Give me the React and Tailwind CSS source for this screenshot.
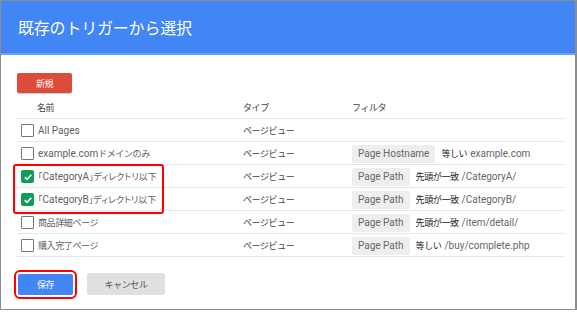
import React from "react";

const rows = [
  { name: "All Pages", type: "ページビュー", checked: false },
  { name: "example.comドメインのみ", type: "ページビュー", chip: "Page Hostname", op: "等しい", value: "example.com" },
  { name: "｢CategoryA｣ディレクトリ以下", narrow: true, type: "ページビュー", checked: true, chip: "Page Path", op: "先頭が一致", value: "/CategoryA/" },
  { name: "｢CategoryB｣ディレクトリ以下", narrow: true, type: "ページビュー", checked: true, chip: "Page Path", op: "先頭が一致", value: "/CategoryB/" },
  { name: "商品詳細ページ", type: "ページビュー", chip: "Page Path", op: "先頭が一致", value: "/item/detail/" },
  { name: "購入完了ページ", type: "ページビュー", chip: "Page Path", op: "等しい", value: "/buy/complete.php" },
];

const font = "font-['Roboto','Noto_Sans_CJK_JP',sans-serif]";
const jp = "font-['Noto_Sans_CJK_JP',sans-serif] text-[9px] leading-none tracking-[-0.4px]";
const jpNarrow = "font-['Noto_Sans_CJK_JP',sans-serif] text-[9px] leading-none [font-feature-settings:'palt']";

// Japanese runs render a bit smaller than the Latin ones in the screenshot
const Mixed = ({ children, narrow }) =>
  children.split(/([\u0020-\u007e]+)/).filter(Boolean).map((part, i) =>
    /^[\u0020-\u007e]+$/.test(part) ? (
      <span key={i} className="leading-none">{part}</span>
    ) : (
      <span key={i} className={narrow ? jpNarrow : jp}>{part}</span>
    )
  );

const Checkbox = ({ checked }) =>
  checked ? (
    <div className="w-[13px] h-[13px] rounded-[2px] bg-[#0f9d58] flex items-center justify-center">
      <svg width="10" height="10" viewBox="0 0 10 10">
        <path d="M1.8 5.2 L4 7.3 L8.3 2.8" fill="none" stroke="#fff" strokeWidth="1.6" />
      </svg>
    </div>
  ) : (
    <div className="w-[13px] h-[13px] rounded-[1px] border-[1.5px] border-[#777] bg-white" />
  );

export default function App() {
  return (
    <div className={`w-[577px] h-[312px] bg-white ${font}`}>
      <div className="relative w-[577px] h-[310px] border-t border-l border-b border-r-2 border-[#8c8c8c] bg-white">
        {/* Header */}
        <div className="h-[54px] bg-[#4285f4] border-b-2 border-[#6aa1f7] flex items-center pl-[17px]">
          <span className="text-white text-[16px] tracking-[-0.2px] font-['Noto_Sans_CJK_JP',sans-serif]">既存のトリガーから選択</span>
        </div>

        <div className="pl-[16px] pr-[10px]">
          <button className="mt-[18px] w-[55px] h-[20px] bg-[#dd4b39] text-white rounded-[2px] shadow-[0_1px_1px_rgba(0,0,0,0.2)] flex items-center justify-center">
            <span className={jp}>新規</span>
          </button>

          {/* Table */}
          <div className="mt-[3px] text-[10px]">
            <div className="h-[23px] pt-[1px] flex items-center border-b border-[#e6e6e6] text-[#444]">
              <div className="w-[226px] pl-[20px]"><span className={jp}>名前</span></div>
              <div className="w-[109px]"><span className={jp}>タイプ</span></div>
              <div><span className={jp}>フィルタ</span></div>
            </div>
            {rows.map((r, i) => (
              <div key={i} className="h-[23px] pt-[1px] flex items-center border-b border-[#e6e6e6]">
                <div className="w-[226px] flex items-center pl-[4px] gap-[4px] text-[#5f5f5f]">
                  <Checkbox checked={r.checked} />
                  <span className="flex items-center">
                    <Mixed narrow={r.narrow}>{r.name}</Mixed>
                  </span>
                </div>
                <div className="w-[109px] text-[#444] flex items-center"><span className={jp}>{r.type}</span></div>
                {r.chip && (
                  <div className="flex items-center">
                    <span className="h-[18px] px-[6px] bg-[#eeeeee] text-[#666] flex items-center rounded-[2px]">{r.chip}</span>
                    <span className={`ml-[6px] text-[#222] ${jp}`}>{r.op}</span>
                    <span className="ml-[3px] text-[#666] leading-none">{r.value}</span>
                  </div>
                )}
              </div>
            ))}
          </div>

          {/* Buttons */}
          <div className="mt-[16px] flex items-center gap-[14px] pl-[1px]">
            <button className="w-[55px] h-[21px] bg-[#4285f4] text-white rounded-[2px] outline-2 outline-[#ff0000] outline-offset-[2px] flex items-center justify-center">
              <span className={jp}>保存</span>
            </button>
            <button className="w-[78px] h-[22px] bg-[#e0e0e0] text-[#555] rounded-[2px] flex items-center justify-center">
              <span className={jp}>キャンセル</span>
            </button>
          </div>
        </div>

        {/* highlight around selected rows */}
        <div className="absolute left-[12px] top-[163px] w-[151px] h-[50px] border-2 border-[#ff0000] rounded-[3px] pointer-events-none" />
      </div>
    </div>
  );
}
